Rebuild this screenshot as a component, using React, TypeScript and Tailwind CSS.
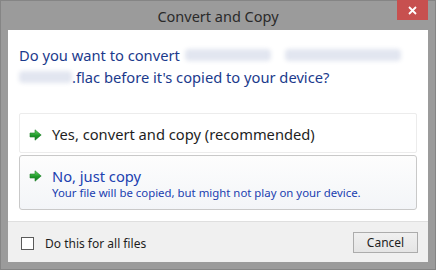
import React from "react";

function Arrow() {
  return (
    <svg width="13" height="12" viewBox="0 0 13 12" className="shrink-0">
      <defs>
        <linearGradient id="ag" x1="0" y1="0" x2="0" y2="1">
          <stop offset="0" stopColor="#6ad865" />
          <stop offset="0.55" stopColor="#1f9a2a" />
          <stop offset="1" stopColor="#157a20" />
        </linearGradient>
      </defs>
      <path d="M1 4 H6 V0.8 L12.2 6 L6 11.2 V8 H1 Z" fill="url(#ag)" stroke="#1c7d25" strokeWidth="0.6" strokeLinejoin="round" />
    </svg>
  );
}

export default function App() {
  const font = { fontFamily: '"Noto Sans", "Open Sans", sans-serif' };
  return (
    <div
      className="w-[436px] h-[270px] bg-[#9b9b9b] border border-[#858585] flex flex-col"
      style={font}
    >
      <div className="relative h-[29px] shrink-0 flex items-center justify-center">
        <span className="text-[14.5px] text-[#2a2a2a] leading-none mt-[1px]">Convert and Copy</span>
        <div className="absolute right-[7px] top-[-1px] w-[31px] h-[20px] bg-[#c7504f] flex items-center justify-center">
          <svg width="9" height="9" viewBox="0 0 9 9">
            <path d="M1 1 L8 8 M8 1 L1 8" stroke="#fff" strokeWidth="1.8" />
          </svg>
        </div>
      </div>
      <div className="mx-[7px] h-[232px] bg-white flex flex-col">
        <div className="pl-[11px] pt-[14px] text-[14.7px] leading-[22px] text-[#1b3a8c]">
          <div className="flex items-center">
            <span>Do you want to convert</span>
            <span className="ml-[5px] w-[86px] h-[12px] bg-[#e2e6f0] blur-[2px] rounded" />
            <span className="ml-[14px] w-[116px] h-[12px] bg-[#e2e6f0] blur-[2px] rounded" />
          </div>
          <div className="flex items-center">
            <span className="w-[53px] h-[12px] bg-[#e2e6f0] blur-[2px] rounded" />
            <span>.flac before it's copied to your device?</span>
          </div>
        </div>
        <div className="mx-[11px] mt-[25px] flex flex-col gap-[2px]">
          <div className="h-[40px] border border-[#ececec] rounded-[2px] flex items-center pl-[9px] pt-[3px] gap-[10px]">
            <Arrow />
            <span className="text-[14.7px] text-[#1e1e1e] leading-none">Yes, convert and copy (recommended)</span>
          </div>
          <div className="h-[55px] border border-[#c9c9c9] rounded-[3px] bg-gradient-to-b from-[#fdfdfd] to-[#f3f5f8] flex flex-col justify-center pl-[9px] pt-[1px]">
            <div className="flex items-center gap-[10px]">
              <Arrow />
              <span className="text-[14.7px] text-[#2040b0] leading-[20px]">No, just copy</span>
            </div>
            <div className="pl-[23px] text-[11.4px] text-[#2040b0] leading-[14px]">
              Your file will be copied, but might not play on your device.
            </div>
          </div>
        </div>
        <div className="mt-auto h-[41px] bg-[#f0f0f0] border-t border-[#dfdfdf] flex items-center pl-[13px] pr-[10px] pt-[1px]">
          <div className="w-[13px] h-[13px] border border-[#5a5a5a] bg-white mt-[2px]" />
          <span className="ml-[11px] text-[12px] text-[#1e1e1e] mt-[2px]">Do this for all files</span>
          <div className="ml-auto w-[65px] h-[21px] border border-[#acacac] bg-gradient-to-b from-[#f0f0f0] to-[#e5e5e5] flex items-center justify-center text-[12px] text-[#1e1e1e]">
            Cancel
          </div>
        </div>
      </div>
    </div>
  );
}
